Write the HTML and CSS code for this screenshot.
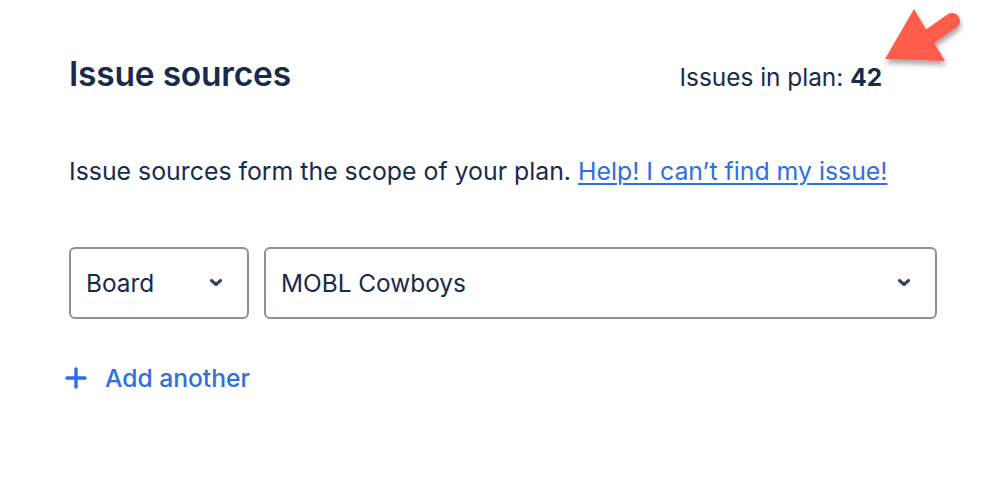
FILE: index.html
```html
<!DOCTYPE html>
<html>
<head>
<meta charset="utf-8">
<link rel="stylesheet" href="styles.css">
</head>
<body>
<div class="page">
  <div class="header">
    <h1 class="title">Issue sources</h1>
    <div class="count">Issues in plan: <strong>42</strong></div>
  </div>
  <p class="desc">Issue sources form the scope of your plan. <a href="#" class="help">Help! I can’t find my issue!</a></p>
  <div class="row">
    <div class="select select-type">
      <span>Board</span>
      <svg class="chev" width="14" height="10" viewBox="0 0 14 10"><path d="M2.5 2.5 L7 6.5 L11.5 2.5" fill="none" stroke="#344563" stroke-width="3.2" stroke-linecap="round" stroke-linejoin="round"/></svg>
    </div>
    <div class="select select-value">
      <span>MOBL Cowboys</span>
      <svg class="chev" width="14" height="10" viewBox="0 0 14 10"><path d="M2.5 2.5 L7 6.5 L11.5 2.5" fill="none" stroke="#344563" stroke-width="3.2" stroke-linecap="round" stroke-linejoin="round"/></svg>
    </div>
  </div>
  <a href="#" class="add">
    <svg width="22" height="22" viewBox="0 0 22 22"><path d="M11 2 V20 M2 11 H20" stroke="#2F6FE4" stroke-width="3.4" stroke-linecap="round"/></svg>
    <span>Add another</span>
  </a>
</div>
<svg class="arrow" width="120" height="90" viewBox="860 0 120 90">
  <defs>
    <filter id="sh" x="-30%" y="-30%" width="160%" height="160%">
      <feDropShadow dx="1" dy="4" stdDeviation="2.5" flood-color="#000" flood-opacity="0.35"/>
    </filter>
  </defs>
  <g filter="url(#sh)" fill="#FF5B4B" stroke="#FF5B4B">
    <line x1="922" y1="42" x2="952" y2="21" stroke-width="16" stroke-linecap="round"/>
    <polygon points="885,59 914,9 945,61" stroke="none"/>
  </g>
</svg>
</body>
</html>
```

FILE: styles.css
```css
html, body {
  margin: 0;
  padding: 0;
  background: #fff;
}
body {
  font-family: Inter, "Noto Sans", sans-serif;
  color: #172B4D;
  width: 999px;
  height: 483px;
  overflow: hidden;
  position: relative;
}
.page {
  padding: 52px 62px 0 69px;
  width: 868px;
}
.header {
  display: flex;
  justify-content: space-between;
  align-items: baseline;
  padding-right: 55px;
  height: 44px;
}
.title {
  margin: 0;
  font-size: 33.5px;
  font-weight: 600;
  letter-spacing: -0.2px;
  line-height: 44px;
}
.count {
  font-size: 24.4px;
  font-weight: 400;
}
.count strong {
  font-weight: 700;
}
.desc {
  margin: 59px 0 0 0;
  font-size: 24.85px;
  line-height: 32px;
}
.help {
  color: #2F6FE4;
  text-decoration: underline;
  text-decoration-thickness: 2px;
  text-underline-offset: 3px;
}
.row {
  display: flex;
  gap: 15px;
  margin-top: 60px;
}
.select {
  box-sizing: border-box;
  height: 72px;
  border: 2px solid #8993A4;
  border-radius: 6px;
  display: flex;
  align-items: center;
  justify-content: space-between;
  padding: 0 24px 0 15px;
  font-size: 24.4px;
  color: #172B4D;
}
.select-type {
  width: 180px;
}
.select-value {
  width: 673px;
  padding-right: 24px;
}
.chev {
  display: block;
}
.add {
  display: inline-flex;
  align-items: center;
  gap: 18px;
  margin-top: 44px;
  margin-left: -4px;
  color: #2F6FE4;
  text-decoration: none;
  font-size: 24.6px;
  font-weight: 500;
  line-height: 30px;
}
.add svg {
  display: block;
}
.arrow {
  position: absolute;
  left: 860px;
  top: 0;
}
```
